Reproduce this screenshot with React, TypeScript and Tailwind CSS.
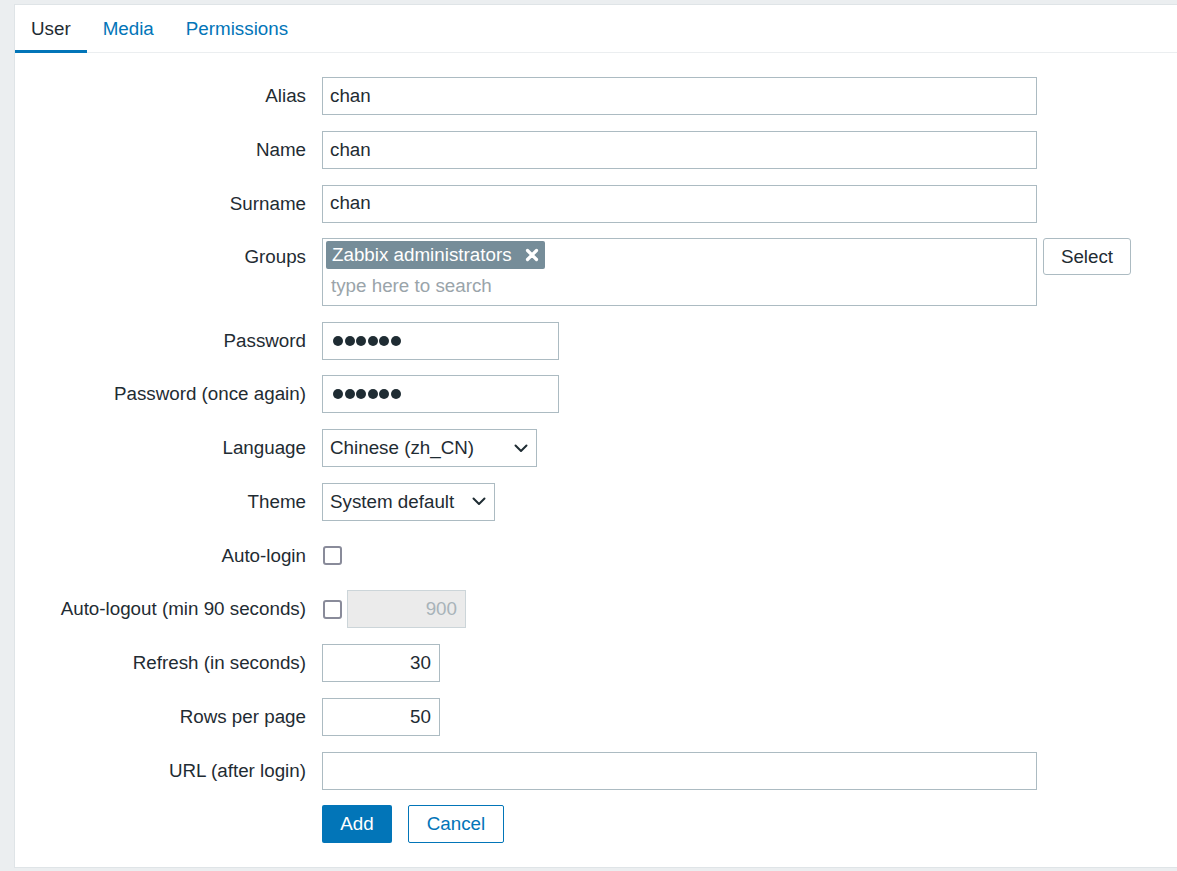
import React from "react";

const inputBase =
  "h-[38px] border border-[#acbbc2] bg-white px-[7px] flex items-center text-[#1f2c33]";

function Row({
  label,
  children,
}: {
  label: string;
  children: React.ReactNode;
}): React.ReactElement {
  return (
    <div className="flex items-start">
      <div className="w-[291px] shrink-0 text-right leading-[38px] text-[#1f2c33]">{label}</div>
      <div className="ml-4 flex items-start">{children}</div>
    </div>
  );
}

function Chevron(): React.ReactElement {
  return (
    <svg width="14" height="9" viewBox="0 0 14 9" className="shrink-0">
      <polyline
        points="1.5,1.5 7,7 12.5,1.5"
        fill="none"
        stroke="#1f2c33"
        strokeWidth="2"
        strokeLinecap="round"
        strokeLinejoin="round"
      />
    </svg>
  );
}

function Checkbox(): React.ReactElement {
  return (
    <div className="flex h-[38px] items-center">
      <div className="ml-px h-[19px] w-[19px] rounded-[3px] border-2 border-[#898b9a] bg-white" />
    </div>
  );
}

function Dots(): React.ReactElement {
  return (
    <div className="ml-[3px] flex gap-[1.5px]">
      {[0, 1, 2, 3, 4, 5].map((i) => (
        <span key={i} className="block h-[10px] w-[10px] rounded-full bg-[#1f2c33]" />
      ))}
    </div>
  );
}

export default function App(): React.ReactElement {
  return (
    <div className="min-h-[871px] bg-[#ebeef0] pl-[14px] pt-[4px] font-['Liberation_Sans',Arial,sans-serif] text-[18.8px]">
      <div className="border border-r-0 border-[#dfe4e7] bg-white pb-[24px]">
        {/* tabs */}
        <div className="flex h-[48px] border-b border-[#ebeef0] pt-[2px]">
          <div className="relative flex items-center px-4 text-[#1f2c33]">
            User
            <span className="absolute -bottom-px left-0 right-0 h-[3px] bg-[#0275b8]" />
          </div>
          <div className="flex items-center px-4 text-[#0275b8]">Media</div>
          <div className="flex items-center px-4 text-[#0275b8]">Permissions</div>
        </div>

        <div className="mt-[24px] flex flex-col gap-[15.75px]">
          <Row label="Alias">
            <div className={`${inputBase} w-[715px]`}>chan</div>
          </Row>
          <Row label="Name">
            <div className={`${inputBase} w-[715px]`}>chan</div>
          </Row>
          <Row label="Surname">
            <div className={`${inputBase} w-[715px]`}>chan</div>
          </Row>
          <Row label="Groups">
            <div className="h-[67.5px] w-[715px] border border-[#acbbc2] bg-white px-[3px] pt-[2px]">
              <div className="inline-flex h-[28px] items-center gap-[13px] rounded-[2px] bg-[#768d99] pl-[6px] pr-[6px] text-white">
                <span>Zabbix administrators</span>
                <svg width="14" height="14" viewBox="0 0 14 14">
                  <path d="M2.5 2.5 L11.5 11.5 M11.5 2.5 L2.5 11.5" stroke="#fff" strokeWidth="3.2" strokeLinecap="round" />
                </svg>
              </div>
              <div className="mt-[4px] pl-[5px] leading-[26px] text-[#9aa4aa]">type here to search</div>
            </div>
            <div className="ml-[6px] flex h-[37px] w-[88px] items-center justify-center rounded-[3px] border border-[#acbbc2] bg-white text-[#1f2c33]">
              Select
            </div>
          </Row>
          <Row label="Password">
            <div className={`${inputBase} w-[237px]`}>
              <Dots />
            </div>
          </Row>
          <Row label="Password (once again)">
            <div className={`${inputBase} w-[237px]`}>
              <Dots />
            </div>
          </Row>
          <Row label="Language">
            <div className={`${inputBase} w-[215px] justify-between pr-[8px]`}>
              <span>Chinese (zh_CN)</span>
              <Chevron />
            </div>
          </Row>
          <Row label="Theme">
            <div className={`${inputBase} w-[173px] justify-between pr-[8px]`}>
              <span>System default</span>
              <Chevron />
            </div>
          </Row>
          <Row label="Auto-login">
            <Checkbox />
          </Row>
          <Row label="Auto-logout (min 90 seconds)">
            <Checkbox />
            <div className="ml-[5px] flex h-[38px] w-[119px] items-center justify-end border border-[#ccd5d9] bg-[#ebebeb] px-[8px] text-[#a8b3b9]">
              900
            </div>
          </Row>
          <Row label="Refresh (in seconds)">
            <div className={`${inputBase} w-[118px] justify-end pr-[8px]`}>30</div>
          </Row>
          <Row label="Rows per page">
            <div className={`${inputBase} w-[118px] justify-end pr-[8px]`}>50</div>
          </Row>
          <Row label="URL (after login)">
            <div className={`${inputBase} w-[715px]`} />
          </Row>
          <Row label="">
            <div className="flex gap-4">
              <div className="flex h-[38px] w-[70px] items-center justify-center rounded-[2px] bg-[#0275b8] text-white">
                Add
              </div>
              <div className="flex h-[38px] w-[96px] items-center justify-center rounded-[2px] border border-[#0275b8] bg-white text-[#0275b8]">
                Cancel
              </div>
            </div>
          </Row>
        </div>
      </div>
    </div>
  );
}
